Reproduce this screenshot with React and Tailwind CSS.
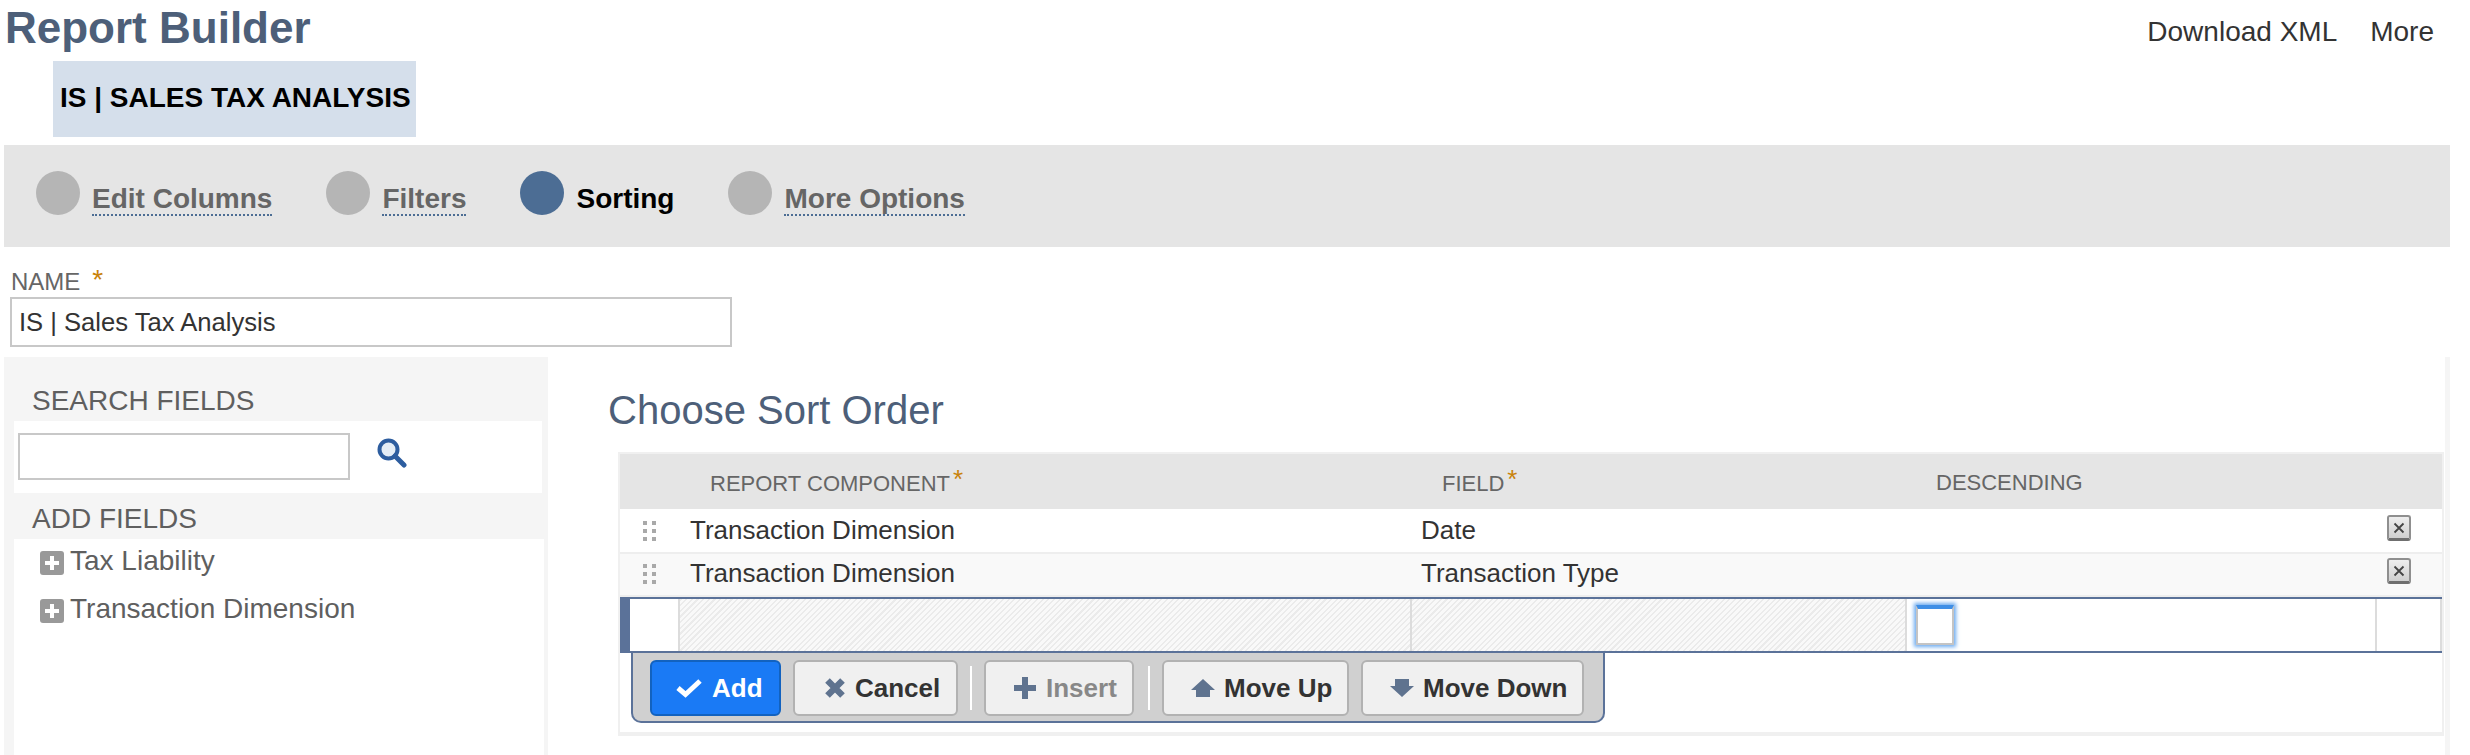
const Star = ({ className = '' }) => <span className={`text-[#c9820a] ${className}`}>*</span>

const stepItems = [
  { label: 'Edit Columns' },
  { label: 'Filters' },
  { label: 'Sorting', active: true },
  { label: 'More Options' },
]

function CheckIcon() {
  return (
    <svg width="26" height="20" viewBox="0 0 26 20" className="shrink-0">
      <path d="M2 10 L9.5 16.5 L24 3" fill="none" stroke="#fff" strokeWidth="5" />
    </svg>
  )
}

function CrossIcon() {
  return (
    <svg width="22" height="22" viewBox="0 0 22 22" className="shrink-0">
      <path d="M3.5 3.5 L18.5 18.5 M18.5 3.5 L3.5 18.5" fill="none" stroke="#5f738f" strokeWidth="6.5" />
    </svg>
  )
}

function PlusIcon() {
  return (
    <svg width="24" height="24" viewBox="0 0 24 24" className="shrink-0">
      <path d="M12 1 V23 M1 12 H23" fill="none" stroke="#5f738f" strokeWidth="6" />
    </svg>
  )
}

function UpIcon() {
  return (
    <svg width="24" height="18" viewBox="0 0 24 18" className="shrink-0">
      <path d="M12 0 L24 11 H19 V18 H5 V11 H0 Z" fill="#5f738f" />
    </svg>
  )
}

function DownIcon() {
  return (
    <svg width="24" height="18" viewBox="0 0 24 18" className="shrink-0">
      <path d="M5 0 H19 V7 H24 L12 18 L0 7 H5 Z" fill="#5f738f" />
    </svg>
  )
}

function Grip() {
  return (
    <div className="grid grid-cols-2 gap-x-[4px] gap-y-[4px] w-[13px]">
      {[0, 1, 2, 3, 4, 5].map(i => <span key={i} className="w-[4px] h-[4px] bg-[#a9a9a9]" />)}
    </div>
  )
}

function RemoveButton() {
  return (
    <div className="w-[24px] h-[26px] flex items-center justify-center rounded-[3px] bg-[linear-gradient(#eeeeee,#cfcfcf)] border-2 border-[#8f8f8f] border-b-[3px] border-b-[#6f6f6f]">
      <svg width="12" height="12" viewBox="0 0 12 12">
        <path d="M1.5 1.5 L10.5 10.5 M10.5 1.5 L1.5 10.5" stroke="#444" strokeWidth="1.8" />
      </svg>
    </div>
  )
}

function TreeRow({ label }) {
  return (
    <div className="flex items-start h-[48px] pl-[26px] pt-[6px] text-[28px] leading-[32px] text-[#5f5f5f]">
      <span className="w-[24px] h-[24px] mt-[6px] mr-[6px] rounded-[3px] bg-[#999] flex items-center justify-center">
        <svg width="16" height="16" viewBox="0 0 16 16">
          <path d="M8 1 V15 M1 8 H15" stroke="#fff" strokeWidth="4" />
        </svg>
      </span>
      {label}
    </div>
  )
}

function ToolButton({ icon, label, width, pl, muted }) {
  return (
    <button
      className={`h-[56px] flex items-center gap-[9px] rounded-[6px] border-2 border-[#b2b2b2] bg-[#f0f0f0] text-[26px] font-bold ${muted ? 'text-[#888]' : 'text-[#333]'} ${width} ${pl}`}
    >
      {icon}
      {label}
    </button>
  )
}

const rowGrid = 'grid grid-cols-[60px_732px_495px_470px_65px]'

export default function App() {
  return (
    <div className="w-[2470px] h-[755px] overflow-hidden bg-white font-['Liberation_Sans',Arial,sans-serif]">
      {/* Header */}
      <div className="flex justify-between h-[61px]">
        <h1 className="pl-[5px] text-[44px] leading-[56px] font-bold text-[#4d5f79]">Report Builder</h1>
        <div className="flex gap-[33px] pr-[36px] pt-[17px] text-[28px] leading-[30px] text-[#333]">
          <span>Download XML</span>
          <span>More</span>
        </div>
      </div>

      {/* Report title */}
      <div className="ml-[53px] w-[363px] h-[76px] pl-[7px] pt-[21px] bg-[#d5dfeb] text-[28px] leading-[32px] font-bold text-black whitespace-nowrap">
        IS | SALES TAX ANALYSIS
      </div>

      {/* Steps */}
      <div className="mt-[8px] ml-[4px] w-[2446px] h-[102px] bg-[#e5e5e5] flex pl-[32px] pt-[26px] gap-[54px]">
        {stepItems.map(step => (
          <div key={step.label} className="flex items-start gap-[12px] h-[44px]">
            <span className={`w-[44px] h-[44px] rounded-full ${step.active ? 'bg-[#4c6d94]' : 'bg-[#b5b5b5]'}`} />
            <span
              className={`mt-[12px] text-[28px] leading-[31px] font-bold whitespace-nowrap ${step.active ? 'text-black' : 'text-[#666] border-b-2 border-dotted border-[#4c6d94]'}`}
            >
              {step.label}
            </span>
          </div>
        ))}
      </div>

      {/* Name */}
      <div className="ml-[10px] mt-[21px] h-[29px] pl-[1px] flex text-[24px] leading-[28px] text-[#666]">
        NAME<Star className="ml-[12px] -mt-[2px] text-[28px]" />
      </div>
      <input
        readOnly
        value="IS | Sales Tax Analysis"
        className="block ml-[10px] w-[722px] h-[50px] px-[7px] border-2 border-[#c8c8c8] text-[25.6px] text-[#333] outline-none"
      />

      <div className="flex mt-[10px] h-[398px]">
        {/* Left panel */}
        <div className="ml-[4px] w-[544px] bg-[#f5f5f5] shrink-0 text-[#5f5f5f]">
          <div className="h-[64px] pl-[28px] pt-[29px] text-[28px] leading-[30px]">SEARCH FIELDS</div>
          <div className="ml-[10px] w-[528px] h-[72px] bg-white flex items-start pl-[4px] pt-[12px]">
            <div className="w-[332px] h-[47px] border-2 border-[#c8c8c8]" />
            <svg width="30" height="30" viewBox="0 0 30 30" className="ml-[27px] mt-[5px]">
              <circle cx="11.5" cy="11.5" r="9" fill="#e4edf6" stroke="#2d5d9f" strokeWidth="4" />
              <path d="M18 18 L27 27" stroke="#2d5d9f" strokeWidth="5" strokeLinecap="round" />
            </svg>
          </div>
          <div className="h-[46px] pl-[28px] pt-[11px] text-[28px] leading-[30px]">ADD FIELDS</div>
          <div className="ml-[10px] w-[530px] h-[216px] bg-white">
            <TreeRow label="Tax Liability" />
            <TreeRow label="Transaction Dimension" />
          </div>
        </div>

        {/* Sort order */}
        <div className="flex-1 mr-[20px] border-r-[5px] border-[#f5f5f5] pl-[61px]">
          <h2 className="pt-[30px] -ml-[1px] text-[40px] leading-[46px] text-[#4d5f79]">Choose Sort Order</h2>
          <div className="mt-[19px] ml-[9px] w-[1826px] border-2 border-b-4 border-[#f0f0f0]">
            <div className={`${rowGrid} h-[55px] pt-[2px] items-center bg-[#e5e5e5] text-[22px] text-[#666] whitespace-nowrap`}>
              <span />
              <span className="pl-[30px]">REPORT COMPONENT<Star className="ml-[3px] text-[26px] relative -top-[3px]" /></span>
              <span className="pl-[30px]">FIELD<Star className="ml-[3px] text-[26px] relative -top-[3px]" /></span>
              <span className="pl-[29px]">DESCENDING</span>
              <span />
            </div>
            {['Date', 'Transaction Type'].map((field, i) => (
              <div
                key={field}
                className={`${rowGrid} items-center text-[26px] text-[#333] border-b-2 border-[#eeeeee] ${i === 0 ? 'h-[45px] bg-white' : 'h-[43px] pb-[2px] bg-[#f9f9f9]'}`}
              >
                <span className="pl-[23px]"><Grip /></span>
                <span className="pl-[10px]">Transaction Dimension</span>
                <span className="pl-[9px]">{field}</span>
                <span />
                <span className={`pl-[10px] self-start ${i === 0 ? 'pt-[6px]' : 'pt-[4px]'}`}><RemoveButton /></span>
              </div>
            ))}
            <div className={`${rowGrid} h-[56px] border-y-2 border-[#5b7299]`}>
              <div className="bg-white border-l-[10px] border-[#5b7299] border-r-2 border-r-[#dcdcdc]" />
              <div className="bg-[repeating-linear-gradient(135deg,#ebebeb_0,#ebebeb_1.5px,#f9f9f9_1.5px,#f9f9f9_4px)] border-r-2 border-[#dcdcdc]" />
              <div className="bg-[repeating-linear-gradient(135deg,#ebebeb_0,#ebebeb_1.5px,#f9f9f9_1.5px,#f9f9f9_4px)] border-r-2 border-[#dcdcdc]" />
              <div className="bg-white border-r-2 border-[#dcdcdc] pl-[9px] pt-[6px]">
                <div className="w-[38px] h-[40px] bg-white border-2 border-[#c4c4c4] border-t-[4px] border-t-[#3f8fe6] shadow-[0_0_4px_2px_#6cabf0]" />
              </div>
              <div className="bg-white border-r-2 border-[#dcdcdc]" />
            </div>
            <div className="h-[79px] bg-white">
              <div className="ml-[11px] w-[974px] h-[70px] flex items-start gap-[12px] pl-[17px] pt-[7px] bg-[#d0d0d0] border-x-2 border-b-2 border-[#5b7299] rounded-b-[10px]">
                <button className="h-[56px] w-[131px] pl-[24px] flex items-center gap-[10px] rounded-[6px] border-2 border-[#1262bf] bg-[#1a7af5] text-[26px] font-bold text-white">
                  <CheckIcon />
                  Add
                </button>
                <ToolButton icon={<CrossIcon />} label="Cancel" width="w-[165px]" pl="pl-[29px]" />
                <span className="w-[2px] h-[44px] mt-[6px] bg-white" />
                <ToolButton icon={<PlusIcon />} label="Insert" width="w-[150px]" pl="pl-[27px]" muted />
                <span className="w-[2px] h-[44px] mt-[6px] ml-[2px] bg-white" />
                <ToolButton icon={<UpIcon />} label="Move Up" width="w-[187px]" pl="pl-[27px]" />
                <ToolButton icon={<DownIcon />} label="Move Down" width="w-[223px]" pl="pl-[27px]" />
              </div>
            </div>
          </div>
        </div>
      </div>
    </div>
  )
}
